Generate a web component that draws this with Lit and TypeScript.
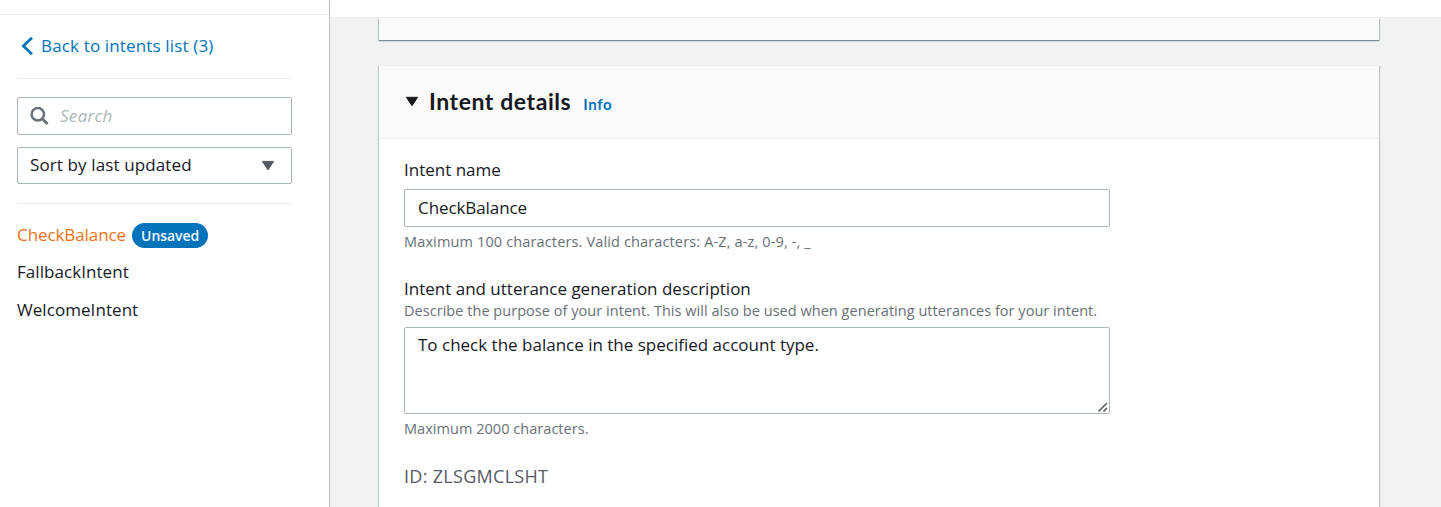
import { LitElement, html, css } from "lit";
import { customElement, property, state } from "lit/decorators.js";

interface Intent {
  name: string;
  unsaved?: boolean;
}

@customElement("intent-sidebar")
export class IntentSidebar extends LitElement {
  @property({ attribute: false }) intents: Intent[] = [];
  @property() selected = "";

  static styles = css`
    :host {
      display: flex;
      flex-direction: column;
      box-sizing: border-box;
      width: 330px;
      flex: none;
      background: #fff;
      border-right: 1px solid #b5bfbf;
      color: #16191f;
    }
    .top {
      height: 14px;
      flex: none;
      border-bottom: 1px solid #eaeded;
    }
    .body {
      display: flex;
      flex-direction: column;
      padding: 0 37px 0 17px;
    }
    .back {
      display: flex;
      align-items: center;
      box-sizing: border-box;
      height: 64px;
      padding: 0 0 2px 4px;
      gap: 7px;
      color: #0073bb;
      letter-spacing: 0.15px;
      text-decoration: none;
      border-bottom: 1px solid #eaeded;
    }
    .field {
      display: flex;
      align-items: center;
      box-sizing: border-box;
      border: 1px solid #aab7b8;
      border-radius: 2px;
      background: #fff;
    }
    .search {
      height: 38px;
      margin-top: 18px;
      padding-left: 12px;
      gap: 11px;
      color: #aab7b8;
      font-style: italic;
      letter-spacing: 0.3px;
    }
    .select {
      height: 37px;
      margin-top: 12px;
      padding: 0 16px 1px 12px;
      justify-content: space-between;
      letter-spacing: 0.12px;
    }
    svg {
      display: block;
      flex: none;
    }
    .list {
      display: flex;
      flex-direction: column;
      margin: 19px 0 0;
      padding: 12px 0 0;
      list-style: none;
      border-top: 1px solid #eaeded;
    }
    .item {
      display: flex;
      align-items: center;
      height: 37.5px;
      gap: 6px;
    }
    .name {
      letter-spacing: 0.06px;
    }
    .selected {
      color: #ec7211;
      letter-spacing: -0.08px;
    }
    .badge {
      box-sizing: border-box;
      height: 25px;
      padding: 0 9px;
      border-radius: 13px;
      background: #0073bb;
      color: #f2f8fd;
      font-size: 14px;
      font-weight: 600;
      line-height: 25px;
      letter-spacing: -0.07px;
      margin-top: 2px;
    }
  `;

  render() {
    return html`
      <div class="top"></div>
      <div class="body">
        <a class="back">
          <svg width="13" height="20" viewBox="0 0 13 20">
            <path d="M11 1.8 L2.4 10 L11 18.2" fill="none" stroke="#0073bb" stroke-width="2.8" />
          </svg>
          <span>Back to intents list (3)</span>
        </a>
        <div class="field search">
          <svg width="19" height="20" viewBox="0 0 19 20" fill="none" stroke="#687078">
            <circle cx="7.8" cy="8.2" r="6.2" stroke-width="2.5" />
            <path d="M12.3 12.7 L17.6 18" stroke-width="2.9" />
          </svg>
          <span>Search</span>
        </div>
        <div class="field select">
          <span>Sort by last updated</span>
          <svg width="14" height="12" viewBox="0 0 14 12">
            <path d="M1.4 2.4 H12.6 L7 11 Z" fill="#545b64" stroke="#545b64" stroke-linejoin="round" />
          </svg>
        </div>
        <ul class="list">
          ${this.intents.map(
            (i) => html`<li class="item">
              <span class=${i.name === this.selected ? "selected" : "name"}>${i.name}</span>
              ${i.unsaved ? html`<span class="badge">Unsaved</span>` : ""}
            </li>`
          )}
        </ul>
      </div>
    `;
  }
}

@customElement("intent-details")
export class IntentDetails extends LitElement {
  static styles = css`
    :host {
      display: flex;
      flex-direction: column;
      flex: 1;
      min-height: 0;
      background: #fff;
      color: #16191f;
      box-shadow: 1px 1px 1px 0 rgba(0, 28, 36, 0.22), -1px 1px 1px 0 rgba(0, 28, 36, 0.2);
    }
    .header {
      display: flex;
      align-items: baseline;
      box-sizing: border-box;
      height: 74px;
      flex: none;
      padding: 21px 0 0 26px;
      background: #fafafa;
      border-bottom: 1px solid #eaeded;
      border-top: 1px solid #eaeded;
    }
    .caret {
      align-self: flex-start;
      margin-top: 9px;
    }
    .title {
      margin: 0 12px 0 10px;
      font: 700 23px/28px Lato, sans-serif;
      letter-spacing: 0.57px;
    }
    .info {
      color: #0073bb;
      font: 700 15px/20px Lato, sans-serif;
      letter-spacing: 0.65px;
    }
    .content {
      display: flex;
      flex-direction: column;
      padding: 19px 269px 0 25px;
    }
    .label {
      line-height: 24px;
    }
    .hint {
      color: #687078;
      font-size: 14.5px;
      line-height: 20px;
      letter-spacing: 0.04px;
      white-space: nowrap;
    }
    .limits {
      letter-spacing: 0.14px;
    }
    .box {
      box-sizing: border-box;
      width: 706px;
      border: 1px solid #aab7b8;
      border-radius: 2px;
      padding: 0 13px;
      background: #fff;
    }
    .input {
      height: 38px;
      margin: 7px 0 5px;
      line-height: 35px;
      letter-spacing: -0.08px;
    }
    .second {
      margin-top: 25px;
    }
    .area {
      display: flex;
      justify-content: space-between;
      height: 87px;
      margin: 6px 0 5px;
      padding: 5px 0 0 13px;
      line-height: 24px;
    }
    .grip {
      align-self: flex-end;
      display: block;
    }
    .id {
      margin-top: 25px;
      color: #545b64;
      font-size: 18px;
      line-height: 24px;
      letter-spacing: 0.3px;
    }
  `;

  render() {
    return html`
      <div class="header">
        <svg class="caret" width="14" height="11" viewBox="0 0 14 11">
          <path d="M1.4 1.3 H12.6 L7 9.8 Z" fill="#16191f" stroke="#16191f" stroke-linejoin="round" />
        </svg>
        <h2 class="title">Intent details</h2>
        <a class="info">Info</a>
      </div>
      <div class="content">
        <div class="label">Intent name</div>
        <div class="box input">CheckBalance</div>
        <div class="hint limits">Maximum 100 characters. Valid characters: A-Z, a-z, 0-9, -, _</div>
        <div class="label second">Intent and utterance generation description</div>
        <div class="hint">Describe the purpose of your intent. This will also be used when generating utterances for your intent.</div>
        <div class="box area">
          <span>To check the balance in the specified account type.</span>
          <svg class="grip" width="12" height="12" viewBox="0 0 12 12">
            <path d="M1.5 10.5 L10 2 M6.5 10.5 L10 7" fill="none" stroke="#555" stroke-width="1.5" />
          </svg>
        </div>
        <div class="hint">Maximum 2000 characters.</div>
        <div class="id">ID: ZLSGMCLSHT</div>
      </div>
    `;
  }
}

@customElement("app-root")
export class AppRoot extends LitElement {
  @state() intents: Intent[] = [
    { name: "CheckBalance", unsaved: true },
    { name: "FallbackIntent" },
    { name: "WelcomeIntent" },
  ];

  static styles = css`
    :host {
      display: flex;
      height: 507px;
      overflow: hidden;
      font: 17px/24px "Open Sans", "Noto Sans", sans-serif;
      background: #f2f3f3;
    }
    .main {
      display: flex;
      flex-direction: column;
      flex: 1;
      min-width: 0;
    }
    .top {
      height: 17px;
      flex: none;
      background: #fff;
      border-bottom: 1px solid #eaeded;
    }
    .scroll {
      display: flex;
      flex-direction: column;
      flex: 1;
      min-height: 0;
      padding: 0 62px 0 49px;
      overflow: hidden;
      background: #f1f3f3;
    }
    .previous {
      height: 22px;
      flex: none;
      margin-bottom: 25px;
      background: #fafafa;
      box-shadow: 0 1px 1px 0 #7d8f94, 1px 1px 1px 0 rgba(0, 28, 36, 0.2),
        -1px 1px 1px 0 rgba(0, 28, 36, 0.18);
    }
  `;

  render() {
    return html`
      <intent-sidebar .intents=${this.intents} selected="CheckBalance"></intent-sidebar>
      <main class="main">
        <div class="top"></div>
        <div class="scroll">
          <div class="previous"></div>
          <intent-details></intent-details>
        </div>
      </main>
    `;
  }
}
